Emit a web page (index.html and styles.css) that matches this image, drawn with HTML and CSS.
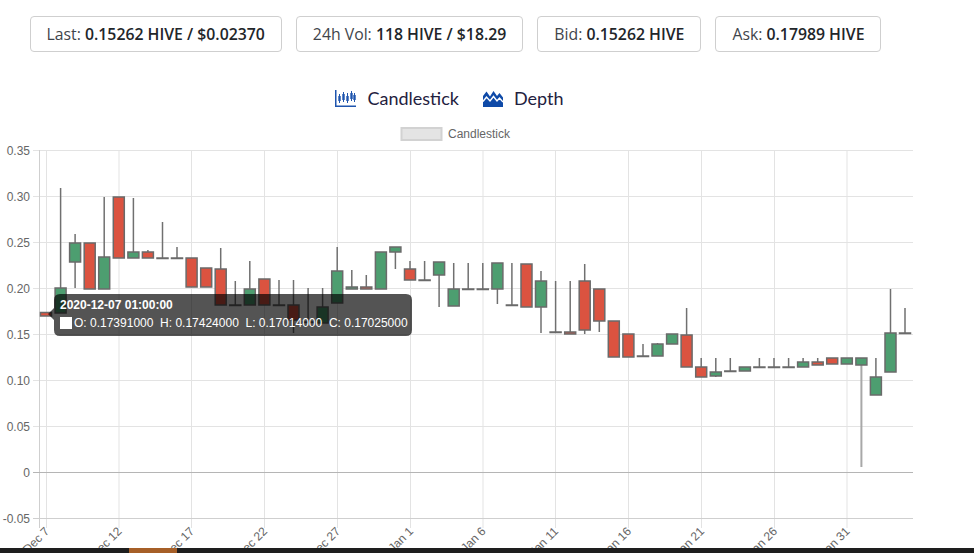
FILE: index.html
```html
<!DOCTYPE html>
<html lang="en">
<head>
<meta charset="utf-8">
<title>Market</title>
<link rel="stylesheet" href="styles.css">
</head>
<body>
<div class="page">
  <div class="stats">
    <div class="stat">Last:&nbsp;<b>0.15262 HIVE / $0.02370</b></div>
    <div class="stat">24h Vol:&nbsp;<b>118 HIVE / $18.29</b></div>
    <div class="stat">Bid:&nbsp;<b>0.15262 HIVE</b></div>
    <div class="stat">Ask:&nbsp;<b>0.17989 HIVE</b></div>
  </div>
  <div class="tabs">
    <div class="tab">
      <svg class="tab-icon" width="21" height="17" viewBox="0 0 21 17">
        <path d="M0.75 0 V16.25 H21" fill="none" stroke="#1f55ae" stroke-width="1.5"/>
        <g stroke="#1f55ae" stroke-width="1">
          <line x1="4.5" y1="4" x2="4.5" y2="13"/>
          <line x1="8.5" y1="2" x2="8.5" y2="12"/>
          <line x1="12.5" y1="3" x2="12.5" y2="13"/>
          <line x1="16.5" y1="1" x2="16.5" y2="11"/>
          <line x1="19.5" y1="3" x2="19.5" y2="12"/>
        </g>
        <g fill="#1f55ae">
          <rect x="3.3" y="6" width="2.4" height="5"/>
          <rect x="7.3" y="4" width="2.4" height="6"/>
          <rect x="11.3" y="6" width="2.4" height="5"/>
          <rect x="15.3" y="3" width="2.4" height="6"/>
          <rect x="18.3" y="5" width="2.4" height="5"/>
        </g>
      </svg>
      <span>Candlestick</span>
    </div>
    <div class="tab">
      <svg class="tab-icon" width="20" height="17" viewBox="0 0 20 17">
        <polygon points="0,17 0,6 3.5,1.5 7,6.5 10.5,1 14,6 16.5,3 20,7.5 20,17" fill="#0f4aa8"/>
        <polyline points="0,11.5 3.5,7 7,11 10.5,6.5 14,11 16.5,8 20,12" fill="none" stroke="#fff" stroke-width="1.4"/>
      </svg>
      <span>Depth</span>
    </div>
  </div>
  <svg class="chart" width="974" height="430" viewBox="0 118 974 430">
    <g class="legend">
      <rect x="401.5" y="128" width="40" height="12" class="legend-box"/>
      <text x="448" y="138" class="lbl">Candlestick</text>
    </g>
    <g class="grid">
      <line x1="33" y1="150.5" x2="913" y2="150.5"/>
      <line x1="33" y1="196.5" x2="913" y2="196.5"/>
      <line x1="33" y1="242.5" x2="913" y2="242.5"/>
      <line x1="33" y1="288.5" x2="913" y2="288.5"/>
      <line x1="33" y1="334.5" x2="913" y2="334.5"/>
      <line x1="33" y1="380.5" x2="913" y2="380.5"/>
      <line x1="33" y1="426.5" x2="913" y2="426.5"/>
      <line x1="46.5" y1="150" x2="46.5" y2="528"/>
      <line x1="119" y1="150" x2="119" y2="528"/>
      <line x1="191.5" y1="150" x2="191.5" y2="528"/>
      <line x1="264.5" y1="150" x2="264.5" y2="528"/>
      <line x1="337.5" y1="150" x2="337.5" y2="528"/>
      <line x1="410.5" y1="150" x2="410.5" y2="528"/>
      <line x1="483" y1="150" x2="483" y2="528"/>
      <line x1="555.5" y1="150" x2="555.5" y2="528"/>
      <line x1="628.5" y1="150" x2="628.5" y2="528"/>
      <line x1="701.5" y1="150" x2="701.5" y2="528"/>
      <line x1="774.5" y1="150" x2="774.5" y2="528"/>
      <line x1="847" y1="150" x2="847" y2="528"/>
    </g>
    <g class="axis">
      <line x1="39.5" y1="150" x2="39.5" y2="528"/>
      <line x1="33" y1="518.5" x2="913" y2="518.5"/>
    </g>
    <line class="zero" x1="33" y1="472.5" x2="913" y2="472.5"/>
    <g class="lbl ylbl">
      <text x="30" y="155">0.35</text>
      <text x="30" y="201">0.30</text>
      <text x="30" y="247">0.25</text>
      <text x="30" y="293">0.20</text>
      <text x="30" y="339">0.15</text>
      <text x="30" y="385">0.10</text>
      <text x="30" y="431">0.05</text>
      <text x="30" y="477">0</text>
      <text x="30" y="523">-0.05</text>
    </g>
    <g class="lbl xlbl">
      <text x="50" y="532" transform="rotate(-45 50 532)">Dec 7</text>
      <text x="122.5" y="532" transform="rotate(-45 122.5 532)">Dec 12</text>
      <text x="195" y="532" transform="rotate(-45 195 532)">Dec 17</text>
      <text x="268" y="532" transform="rotate(-45 268 532)">Dec 22</text>
      <text x="341" y="532" transform="rotate(-45 341 532)">Dec 27</text>
      <text x="414" y="532" transform="rotate(-45 414 532)">Jan 1</text>
      <text x="486.5" y="532" transform="rotate(-45 486.5 532)">Jan 6</text>
      <text x="559" y="532" transform="rotate(-45 559 532)">Jan 11</text>
      <text x="632" y="532" transform="rotate(-45 632 532)">Jan 16</text>
      <text x="705" y="532" transform="rotate(-45 705 532)">Jan 21</text>
      <text x="778" y="532" transform="rotate(-45 778 532)">Jan 26</text>
      <text x="850.5" y="532" transform="rotate(-45 850.5 532)">Jan 31</text>
    </g>
    <g class="wicks">
      <line x1="60.6" y1="188" x2="60.6" y2="313"/>
      <line x1="75.1" y1="234" x2="75.1" y2="288"/>
      <line x1="104.2" y1="197" x2="104.2" y2="289"/>
      <line x1="133.4" y1="198" x2="133.4" y2="258"/>
      <line x1="147.9" y1="250" x2="147.9" y2="258"/>
      <line x1="162.5" y1="222" x2="162.5" y2="258"/>
      <line x1="177" y1="247" x2="177" y2="258"/>
      <line x1="220.7" y1="248" x2="220.7" y2="305"/>
      <line x1="235.3" y1="281" x2="235.3" y2="305"/>
      <line x1="249.8" y1="261" x2="249.8" y2="305"/>
      <line x1="279" y1="280" x2="279" y2="305"/>
      <line x1="293.5" y1="280" x2="293.5" y2="333"/>
      <line x1="308.1" y1="288" x2="308.1" y2="322"/>
      <line x1="322.6" y1="288" x2="322.6" y2="323"/>
      <line x1="337.2" y1="247" x2="337.2" y2="303"/>
      <line x1="351.8" y1="270" x2="351.8" y2="289"/>
      <line x1="366.3" y1="275" x2="366.3" y2="289"/>
      <line x1="395.4" y1="247" x2="395.4" y2="269"/>
      <line x1="410" y1="261" x2="410" y2="280"/>
      <line x1="424.6" y1="261" x2="424.6" y2="280"/>
      <line x1="439.1" y1="262" x2="439.1" y2="307"/>
      <line x1="453.7" y1="263" x2="453.7" y2="306"/>
      <line x1="468.2" y1="263" x2="468.2" y2="289"/>
      <line x1="482.8" y1="263" x2="482.8" y2="289"/>
      <line x1="497.4" y1="263" x2="497.4" y2="304"/>
      <line x1="511.9" y1="263" x2="511.9" y2="305"/>
      <line x1="541" y1="271" x2="541" y2="333"/>
      <line x1="555.6" y1="281" x2="555.6" y2="332"/>
      <line x1="570.2" y1="281" x2="570.2" y2="334"/>
      <line x1="584.7" y1="264" x2="584.7" y2="334"/>
      <line x1="599.3" y1="289" x2="599.3" y2="332"/>
      <line x1="643" y1="344" x2="643" y2="356"/>
      <line x1="657.5" y1="343" x2="657.5" y2="356"/>
      <line x1="686.6" y1="308" x2="686.6" y2="367"/>
      <line x1="701.2" y1="358" x2="701.2" y2="377"/>
      <line x1="715.8" y1="358" x2="715.8" y2="377"/>
      <line x1="730.3" y1="358" x2="730.3" y2="371"/>
      <line x1="759.4" y1="358" x2="759.4" y2="367"/>
      <line x1="774" y1="358" x2="774" y2="367"/>
      <line x1="788.6" y1="358" x2="788.6" y2="367"/>
      <line x1="803.1" y1="358" x2="803.1" y2="367"/>
      <line x1="817.7" y1="358" x2="817.7" y2="365"/>
      <line x1="861.4" y1="358" x2="861.4" y2="467" class="faint"/>
      <line x1="875.9" y1="358" x2="875.9" y2="395"/>
      <line x1="890.5" y1="289" x2="890.5" y2="372"/>
      <line x1="905" y1="308" x2="905" y2="333"/>
    </g>
    <g class="candles">
      <rect class="dn" x="40.5" y="312.5" width="11" height="3.5"/>
      <rect class="up" x="55.1" y="288" width="11" height="25"/>
      <rect class="up" x="69.6" y="243" width="11" height="19"/>
      <rect class="dn" x="84.2" y="243" width="11" height="46"/>
      <rect class="up" x="98.7" y="257" width="11" height="32"/>
      <rect class="dn" x="113.3" y="197" width="11" height="61"/>
      <rect class="up" x="127.9" y="252" width="11" height="6"/>
      <rect class="dn" x="142.4" y="252" width="11" height="6"/>
      <rect class="fl" x="157" y="258" width="11" height="0.5"/>
      <rect class="fl" x="171.5" y="258" width="11" height="0.5"/>
      <rect class="dn" x="186.1" y="258" width="11" height="29"/>
      <rect class="dn" x="200.7" y="268" width="11" height="19"/>
      <rect class="dn" x="215.2" y="269" width="11" height="36"/>
      <rect class="fl" x="229.8" y="305" width="11" height="0.5"/>
      <rect class="up" x="244.3" y="289" width="11" height="16"/>
      <rect class="dn" x="258.9" y="279" width="11" height="26"/>
      <rect class="fl" x="273.5" y="305" width="11" height="0.5"/>
      <rect class="dn" x="288" y="305" width="11" height="15"/>
      <rect class="fl" x="302.6" y="322" width="11" height="0.5"/>
      <rect class="up" x="317.1" y="307" width="11" height="16"/>
      <rect class="up" x="331.7" y="271" width="11" height="32"/>
      <rect class="up" x="346.3" y="287" width="11" height="2"/>
      <rect class="dn" x="360.8" y="287" width="11" height="2"/>
      <rect class="up" x="375.4" y="252" width="11" height="37"/>
      <rect class="up" x="389.9" y="247" width="11" height="5"/>
      <rect class="dn" x="404.5" y="269" width="11" height="11"/>
      <rect class="fl" x="419.1" y="280" width="11" height="0.5"/>
      <rect class="up" x="433.6" y="262" width="11" height="13"/>
      <rect class="up" x="448.2" y="289" width="11" height="17"/>
      <rect class="fl" x="462.7" y="289" width="11" height="0.5"/>
      <rect class="fl" x="477.3" y="289" width="11" height="0.5"/>
      <rect class="up" x="491.9" y="263" width="11" height="26"/>
      <rect class="fl" x="506.4" y="305" width="11" height="0.5"/>
      <rect class="dn" x="521" y="264" width="11" height="43"/>
      <rect class="up" x="535.5" y="281" width="11" height="26"/>
      <rect class="fl" x="550.1" y="332" width="11" height="0.5"/>
      <rect class="dn" x="564.7" y="332" width="11" height="2"/>
      <rect class="dn" x="579.2" y="281" width="11" height="49"/>
      <rect class="dn" x="593.8" y="289" width="11" height="32"/>
      <rect class="dn" x="608.3" y="321" width="11" height="36"/>
      <rect class="dn" x="622.9" y="334" width="11" height="23"/>
      <rect class="fl" x="637.5" y="356" width="11" height="0.5"/>
      <rect class="up" x="652" y="344" width="11" height="12"/>
      <rect class="up" x="666.6" y="334" width="11" height="10"/>
      <rect class="dn" x="681.1" y="335" width="11" height="32"/>
      <rect class="dn" x="695.7" y="367" width="11" height="10"/>
      <rect class="up" x="710.3" y="372" width="11" height="4"/>
      <rect class="fl" x="724.8" y="371" width="11" height="0.5"/>
      <rect class="up" x="739.4" y="367" width="11" height="4"/>
      <rect class="fl" x="753.9" y="367" width="11" height="0.5"/>
      <rect class="fl" x="768.5" y="367" width="11" height="0.5"/>
      <rect class="fl" x="783.1" y="367" width="11" height="0.5"/>
      <rect class="up" x="797.6" y="362" width="11" height="5"/>
      <rect class="dn" x="812.2" y="362" width="11" height="3"/>
      <rect class="dn" x="826.7" y="358" width="11" height="6"/>
      <rect class="up" x="841.3" y="358" width="11" height="6"/>
      <rect class="up" x="855.9" y="358" width="11" height="7"/>
      <rect class="up" x="870.4" y="377" width="11" height="18"/>
      <rect class="up" x="885" y="333" width="11" height="39"/>
      <rect class="fl" x="899.5" y="333" width="11" height="0.5"/>
    </g>
    <g class="tooltip">
      <path class="tip-bg" d="M60 294 H406 Q412 294 412 300 V330 Q412 336 406 336 H60 Q54 336 54 330 V320 L48 314 L54 308 V300 Q54 294 60 294 Z"/>
      <text class="tip-title" x="60" y="309">2020-12-07 01:00:00</text>
      <rect class="tip-swatch" x="60.5" y="317.5" width="11" height="11"/>
      <text class="tip-body" x="74" y="327">O: 0.17391000  H: 0.17424000  L: 0.17014000  C: 0.17025000</text>
    </g>
  </svg>
  <div class="scrollbar"><div class="thumb"></div></div>
</div>
</body>
</html>
```
FILE: styles.css
```css
html, body {
  margin: 0;
  padding: 0;
  background: #ffffff;
  overflow: hidden;
  width: 974px;
  height: 553px;
}

.page {
  width: 974px;
}

.stats {
  width: 911px;
  display: flex;
  justify-content: center;
  gap: 14px;
  padding-top: 16px;
}

.stat {
  box-sizing: border-box;
  height: 36px;
  padding: 0 16px;
  border: 1px solid #cfcfcf;
  border-radius: 4px;
  display: flex;
  align-items: center;
  font-family: "Open Sans", "Noto Sans", sans-serif;
  font-size: 15.8px;
  color: #3f454b;
  white-space: pre;
}

.stat b {
  font-weight: 600;
  color: #22262a;
}

.tabs {
  width: 899px;
  padding-right: 12px;
  height: 24px;
  margin-top: 34px;
  display: flex;
  justify-content: center;
  align-items: center;
  gap: 24px;
}

.tab {
  display: flex;
  align-items: center;
  gap: 11px;
  font-family: "Lato", "Noto Sans", sans-serif;
  font-size: 18px;
  color: #1f2140;
}

.tab-icon {
  display: block;
}

.chart {
  display: block;
  margin-top: 8px;
}

.lbl {
  font-family: "Liberation Sans", Arial, sans-serif;
  font-size: 12px;
  fill: #666666;
}

.ylbl text {
  text-anchor: end;
}

.xlbl text {
  text-anchor: end;
}

.legend-box {
  fill: #e4e4e4;
  stroke: #d2d2d2;
  stroke-width: 2;
}

.grid line {
  stroke: #e3e3e3;
  stroke-width: 1;
}

.axis line {
  stroke: #cfcfcf;
  stroke-width: 1;
}

.zero {
  stroke: #b5b5b5;
  stroke-width: 1;
}

.wicks line {
  stroke: #707070;
  stroke-width: 1.5;
}

.wicks line.faint {
  stroke: #a8a8a8;
  stroke-width: 2;
}

.candles rect {
  stroke: #6a6a6a;
  stroke-width: 1.5;
}

.candles .up {
  fill: #4d9e70;
}

.candles .dn {
  fill: #db5340;
}

.candles .fl {
  fill: #6a6a6a;
}

.tip-bg {
  fill: rgba(0, 0, 0, 0.67);
}

.tip-title {
  font-family: "Liberation Sans", Arial, sans-serif;
  font-size: 12px;
  font-weight: bold;
  fill: #ffffff;
}

.tip-body {
  font-family: "Liberation Sans", Arial, sans-serif;
  font-size: 12px;
  fill: #ffffff;
  white-space: pre;
}

.tip-swatch {
  fill: #ffffff;
  stroke: #ffffff;
  stroke-width: 1;
}

.scrollbar {
  height: 5px;
  background: #1e1e1e;
  display: flex;
}

.thumb {
  margin-left: 129px;
  width: 48px;
  background: #a65f28;
}
```
